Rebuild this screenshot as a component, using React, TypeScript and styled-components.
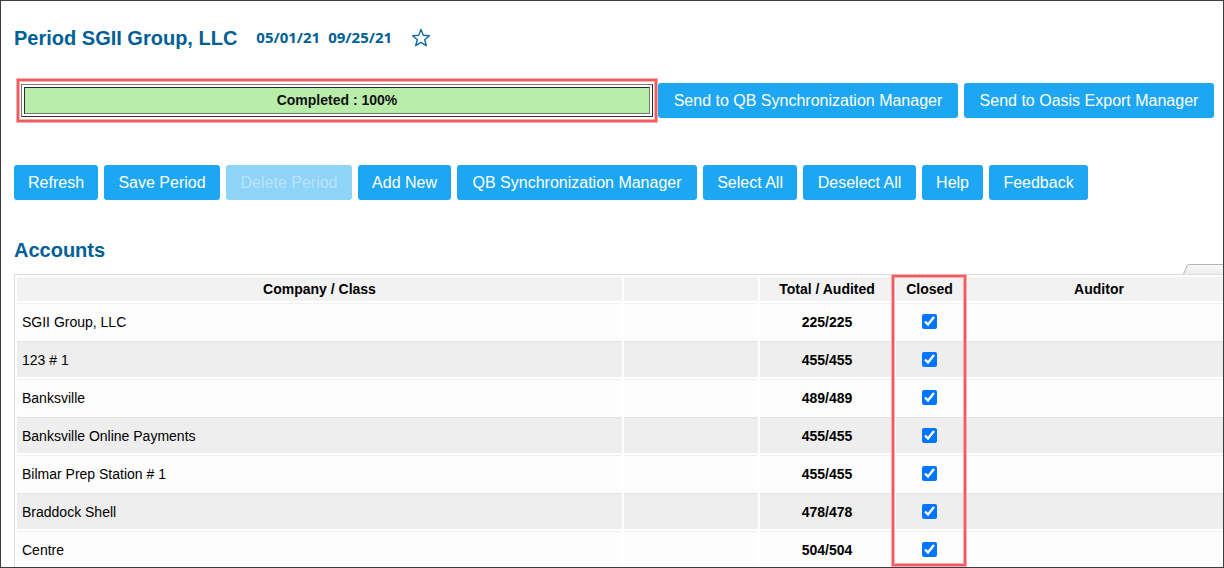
import React, { useState } from "react";
import styled, { createGlobalStyle, css } from "styled-components";

const GlobalStyle = createGlobalStyle`
  *, *::before, *::after { box-sizing: border-box; }
  body {
    margin: 0;
    background: #fff;
    color: #000;
    font-family: "Liberation Sans", Arial, sans-serif;
    font-size: 14px;
  }
`;

const Frame = styled.main`
  height: 100vh;
  border: 1px solid #3d3d40;
  overflow: hidden;
`;

const TitleBar = styled.header`
  display: flex;
  align-items: center;
  height: 36px;
  margin-top: 19px;
  padding-left: 13px;
`;

const Heading = styled.h1`
  margin: 0;
  color: #005f96;
  font-size: 20px;
  line-height: 24px;
  font-weight: bold;
`;

const Dates = styled.div`
  display: flex;
  gap: 8px;
  margin: 0 19px;
  padding-bottom: 2px;
  color: #005f96;
  font: bold 15px/20px "Open Sans", "Noto Sans", sans-serif;
`;

const StarButton = styled.button`
  display: flex;
  padding: 0;
  border: 0;
  background: none;
`;

const redOutline = css`
  border: 2px solid #f05c5f;
  box-shadow: 0 0 0 1px #f7aeb0, inset 0 0 0 1px #f7aeb0;
`;

const SyncBar = styled.section`
  display: flex;
  align-items: center;
  gap: 6px;
  margin-top: 23px;
  padding: 0 9px 0 16px;
`;

const ProgressArea = styled.div`
  flex: 1;
  margin-right: -5px;
  padding: 3px 2px;
  ${redOutline}
`;

const ProgressTrack = styled.div`
  padding: 2px;
  border: 1px solid;
  border-color: #777 #2c2c2c #2c2c2c #777;
`;

const ProgressFill = styled.div`
  height: 27px;
  border: 1px solid;
  border-color: #2c2c2c #777 #777 #2c2c2c;
  background: #b8eeaa;
  color: #111;
  font-weight: bold;
  line-height: 24px;
  text-align: center;
`;

const Toolbar = styled.nav`
  display: flex;
  flex-wrap: wrap;
  gap: 6px;
  margin-top: 43px;
  padding: 0 13px;
`;

const Button = styled.button<{ $minWidth?: number }>`
  height: 35px;
  min-width: ${(p) => p.$minWidth ?? 0}px;
  padding: 0 14px;
  border: 0;
  border-radius: 3px;
  background: #1da7f2;
  color: #fff;
  font: 16px/20px "Liberation Sans", Arial, sans-serif;
  white-space: nowrap;

  &:disabled {
    background: #8ed3f8;
    color: #bbe4fb;
  }
`;

const SectionHead = styled.div`
  display: flex;
  align-items: flex-end;
  justify-content: space-between;
  height: 36px;
  margin-top: 38px;
  padding-left: 13px;
`;

const SectionTitle = styled(Heading).attrs({ as: "h2" })`
  margin-bottom: 12px;
`;

const TableArea = styled.div`
  position: relative;
  padding-left: 13px;
`;

const Table = styled.table`
  width: calc(100% + 2px);
  table-layout: fixed;
  border: 1px solid #dcdcdc;
  border-width: 1px 0 0 1px;
  border-spacing: 2px 0;
`;

const Column = styled.col<{ $width?: number }>`
  width: ${(p) => (p.$width ? `${p.$width}px` : "auto")};
`;

const HeadCell = styled.th`
  height: 28px;
  padding: 0;
  border: solid #fff;
  border-width: 2px 0;
  background: #f2f2f2;
  line-height: 22px;

  &:last-child { padding-left: 10px; }
`;

const Row = styled.tr`
  background: #fdfdfd;

  &:nth-child(even) { background: #eee; }
`;

const Cell = styled.td<{ $center?: boolean }>`
  height: 38px;
  padding: 0 5px;
  border-top: 1px solid #f2f2f2;
  border-bottom: 2px solid #fff;
  text-align: ${(p) => (p.$center ? "center" : "left")};
  font-weight: ${(p) => (p.$center ? "bold" : "normal")};

  ${Row}:nth-child(even) & { border-top-color: #e3e3e3; }
`;

const Checkbox = styled.input`
  display: block;
  width: 15px;
  height: 15px;
  margin: 0 auto;
`;

const ClosedHighlight = styled.div`
  position: absolute;
  top: 1px;
  bottom: 3px;
  left: 891px;
  width: 74px;
  pointer-events: none;
  ${redOutline}
`;

const accounts = [
  { name: "SGII Group, LLC", total: "225/225" },
  { name: "123 # 1", total: "455/455" },
  { name: "Banksville", total: "489/489" },
  { name: "Banksville Online Payments", total: "455/455" },
  { name: "Bilmar Prep Station # 1", total: "455/455" },
  { name: "Braddock Shell", total: "478/478" },
  { name: "Centre", total: "504/504" },
];

const actions = [
  { label: "Refresh", minWidth: 84 },
  { label: "Save Period", minWidth: 116 },
  { label: "Delete Period", minWidth: 126 },
  { label: "Add New", minWidth: 93 },
  { label: "QB Synchronization Manager", minWidth: 240 },
  { label: "Select All", minWidth: 94 },
  { label: "Deselect All", minWidth: 113 },
  { label: "Help", minWidth: 61 },
  { label: "Feedback", minWidth: 99 },
];

export default function App() {
  const [closed, setClosed] = useState(accounts.map(() => true));
  const toggle = (index: number) =>
    setClosed((all) => all.map((value, i) => (i === index ? !value : value)));
  const act = (action: string) => {
    if (action === "Select All") setClosed(accounts.map(() => true));
    if (action === "Deselect All") setClosed(accounts.map(() => false));
  };

  return (
    <>
      <GlobalStyle />
      <Frame>
        <TitleBar>
          <Heading>Period SGII Group, LLC</Heading>
          <Dates>
            <time>05/01/21</time>
            <time>09/25/21</time>
          </Dates>
          <StarButton aria-label="Add to favorites">
            <svg width="20" height="20" viewBox="0 0 20 20" fill="none">
              <path
                d="M10 1.4 L12.300 7.300 L18.400 7.700 L13.700 11.700 L15.300 17.700 L10 14.400 L4.700 17.700 L6.300 11.700 L1.600 7.700 L7.700 7.300 Z"
                stroke="#1668a3"
                strokeWidth="1.4"
                strokeLinejoin="round"
              />
            </svg>
          </StarButton>
        </TitleBar>

        <SyncBar>
          <ProgressArea>
            <ProgressTrack>
              <ProgressFill>Completed : 100%</ProgressFill>
            </ProgressTrack>
          </ProgressArea>
          <Button $minWidth={300}>Send to QB Synchronization Manager</Button>
          <Button $minWidth={250}>Send to Oasis Export Manager</Button>
        </SyncBar>

        <Toolbar>
          {actions.map(({ label, minWidth }) => (
            <Button
              key={label}
              $minWidth={minWidth}
              disabled={label === "Delete Period"}
              onClick={() => act(label)}
            >
              {label}
            </Button>
          ))}
        </Toolbar>

        <SectionHead>
          <SectionTitle>Accounts</SectionTitle>
          <svg width="40" height="10" viewBox="0 0 40 10" aria-hidden="true">
            <defs>
              <linearGradient id="tab" x1="0" y1="0" x2="0" y2="1">
                <stop offset="0" stopColor="#fafafa" />
                <stop offset="1" stopColor="#ececec" />
              </linearGradient>
            </defs>
            <path d="M0.500 10 L4 2 Q4.700 0.500 6 0.500 H40 V10 Z" fill="url(#tab)" />
            <path d="M0.500 10 L4 2 Q4.700 0.500 6 0.500 H40" fill="none" stroke="#b5b5b5" />
          </svg>
        </SectionHead>

        <TableArea>
          <Table>
            <colgroup>
              <Column $width={605} />
              <Column $width={134} />
              <Column $width={134} />
              <Column $width={67} />
              <Column />
            </colgroup>
            <thead>
              <tr>
                <HeadCell>Company / Class</HeadCell>
                <HeadCell />
                <HeadCell>Total / Audited</HeadCell>
                <HeadCell>Closed</HeadCell>
                <HeadCell>Auditor</HeadCell>
              </tr>
            </thead>
            <tbody>
              {accounts.map((account, index) => (
                <Row key={account.name}>
                  <Cell>{account.name}</Cell>
                  <Cell />
                  <Cell $center>{account.total}</Cell>
                  <Cell $center>
                    <Checkbox
                      type="checkbox"
                      aria-label={`${account.name} closed`}
                      checked={closed[index]}
                      onChange={() => toggle(index)}
                    />
                  </Cell>
                  <Cell />
                </Row>
              ))}
            </tbody>
          </Table>
          <ClosedHighlight />
        </TableArea>
      </Frame>
    </>
  );
}
